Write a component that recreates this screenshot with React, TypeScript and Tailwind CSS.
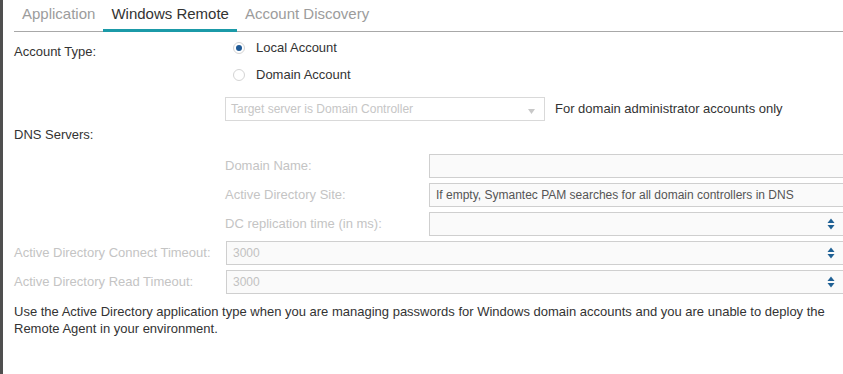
import { ReactNode } from "react";

const tabs = ["Application", "Windows Remote", "Account Discovery"];

function Spinner() {
  return (
    <svg width="8" height="12" viewBox="0 0 8 12" className="absolute right-[14px] top-1/2 -translate-y-1/2">
      <path d="M4 0.5 L7.5 5 L0.5 5 Z" fill="#1f6094" />
      <path d="M0.5 7 L7.5 7 L4 11.5 Z" fill="#1f6094" />
    </svg>
  );
}

function Field({ value, dark, spin }: { value?: string; dark?: boolean; spin?: boolean }) {
  return (
    <div className="relative flex h-[24px] flex-1 items-center border border-r-0 border-[#cfcfcf] bg-[#fafafa] pl-[6px] text-[12px]">
      <span className={dark ? "text-[#555]" : "text-[#c2c2c2]"}>{value}</span>
      {spin && <Spinner />}
    </div>
  );
}

function SubRow({ label, children }: { label: string; children: ReactNode }) {
  return (
    <div className="flex h-[24px] items-center">
      <div className="w-[415px] shrink-0 pl-[211px] text-[#c4c4c4]">{label}</div>
      {children}
    </div>
  );
}

function Radio({ checked, label }: { checked?: boolean; label: string }) {
  return (
    <div className="flex h-[27px] items-center">
      <span className="flex h-[12px] w-[12px] items-center justify-center rounded-full border border-[#d4d4d4] bg-white">
        {checked && <span className="h-[6px] w-[6px] rounded-full bg-[#1f5a96]" />}
      </span>
      <span className="ml-[11px]">{label}</span>
    </div>
  );
}

export default function App() {
  return (
    <div className="flex h-[374px] w-[843px] overflow-hidden bg-white font-['Liberation_Sans',Arial,sans-serif] text-[13px] leading-[16px] text-[#333]">
      <div className="w-[3px] shrink-0 bg-[#4f4f4f]" />
      <div className="flex-1 pl-[11px]">
        <div className="flex h-[32px] border-b border-[#a8a8a8]">
          {tabs.map((t) => (
            <div
              key={t}
              className={`-mb-px px-[8px] pt-[5px] text-[15px] leading-[18px] ${
                t === "Windows Remote"
                  ? "border-b-[3px] border-[#1b9aa8] text-[#333]"
                  : "text-[#9c9c9c]"
              }`}
            >
              {t}
            </div>
          ))}
        </div>

        <div className="mt-[2px] flex">
          <div className="w-[219px] shrink-0 pt-[10px]">Account Type:</div>
          <div className="flex flex-col">
            <Radio checked label="Local Account" />
            <Radio label="Domain Account" />
          </div>
        </div>

        <div className="mt-[9px] flex items-center pl-[211px]">
          <div className="relative flex h-[24px] w-[320px] items-center border border-[#d9d9d9] bg-white pl-[5px] text-[12px] text-[#c6c6c6]">
            Target server is Domain Controller
            <svg width="7" height="5" viewBox="0 0 7 5" className="absolute right-[9px] top-[11px]">
              <path d="M0 0 L7 0 L3.5 5 Z" fill="#c8c8c8" />
            </svg>
          </div>
          <div className="ml-[10px]">For domain administrator accounts only</div>
        </div>

        <div className="mt-[6px]">DNS Servers:</div>

        <div className="-mr-[6px] mt-[11px] flex flex-col gap-[5px]">
          <SubRow label="Domain Name:">
            <Field />
          </SubRow>
          <SubRow label="Active Directory Site:">
            <Field dark value="If empty, Symantec PAM searches for all domain controllers in DNS" />
          </SubRow>
          <SubRow label="DC replication time (in ms):">
            <Field spin />
          </SubRow>
          <div className="flex h-[24px] items-center">
            <div className="w-[212px] shrink-0 text-[#c4c4c4]">Active Directory Connect Timeout:</div>
            <Field value="3000" spin />
          </div>
          <div className="flex h-[24px] items-center">
            <div className="w-[212px] shrink-0 text-[#c4c4c4]">Active Directory Read Timeout:</div>
            <Field value="3000" spin />
          </div>
        </div>

        <p className="mt-[9px] pr-[10px] leading-[17px]">
          Use the Active Directory application type when you are managing passwords for Windows domain accounts and you are unable to deploy the Remote Agent in your environment.
        </p>
      </div>
    </div>
  );
}
